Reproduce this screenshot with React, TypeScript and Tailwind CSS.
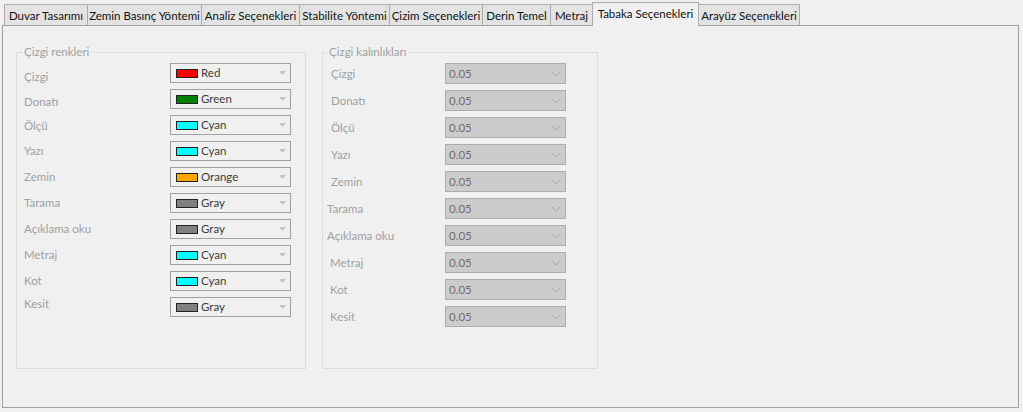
const tabs = [
  { label: "Duvar Tasarımı", cls: "w-[83px] border-l" },
  { label: "Zemin Basınç Yöntemi", cls: "w-[114px] border-l" },
  { label: "Analiz Seçenekleri", cls: "w-[98px] border-l" },
  { label: "Stabilite Yöntemi", cls: "w-[90px] border-l" },
  { label: "Çizim Seçenekleri", cls: "w-[93px] border-l" },
  { label: "Derin Temel", cls: "w-[68px] border-l" },
  { label: "Metraj", cls: "w-[42px] border-l" },
  { label: "Tabaka Seçenekleri", cls: "", active: true },
  { label: "Arayüz Seçenekleri", cls: "w-[101px] border-r" },
];

const colorRows = [
  { label: "Çizgi", color: "Red", swatch: "bg-[#ff0000]", lbl: "pt-[4px]" },
  { label: "Donatı", color: "Green", swatch: "bg-[#008000]", lbl: "pt-[3px]" },
  { label: "Ölçü", color: "Cyan", swatch: "bg-[#00ffff]", lbl: "pt-[1px]" },
  { label: "Yazı", color: "Cyan", swatch: "bg-[#00ffff]", lbl: "pt-0" },
  { label: "Zemin", color: "Orange", swatch: "bg-[#ffa500]", lbl: "pt-0" },
  { label: "Tarama", color: "Gray", swatch: "bg-[#808080]", lbl: "pt-0" },
  { label: "Açıklama oku", color: "Gray", swatch: "bg-[#808080]", lbl: "pt-0" },
  { label: "Metraj", color: "Cyan", swatch: "bg-[#00ffff]", lbl: "pt-0" },
  { label: "Kot", color: "Cyan", swatch: "bg-[#00ffff]", lbl: "pt-0" },
  { label: "Kesit", color: "Gray", swatch: "bg-[#808080]", lbl: "-mt-[3px]" },
];

const widthRows = [
  { label: "Çizgi", pl: "pl-[8px]" },
  { label: "Donatı", pl: "pl-[8px]" },
  { label: "Ölçü", pl: "pl-[8px]" },
  { label: "Yazı", pl: "pl-[8px]" },
  { label: "Zemin", pl: "pl-[8px]" },
  { label: "Tarama", pl: "pl-[4px]" },
  { label: "Açıklama oku", pl: "pl-[4px]" },
  { label: "Metraj", pl: "pl-[7px]" },
  { label: "Kot", pl: "pl-[7px]" },
  { label: "Kesit", pl: "pl-[7px]" },
];

const GroupBox = ({
  title,
  titleCls,
  cls,
  children,
}: {
  title: string;
  titleCls: string;
  cls: string;
  children: React.ReactNode;
}) => (
  <div className={`relative h-[317px] border border-[#dcdcdc] ${cls}`}>
    <span
      className={`absolute -top-[10px] px-[2px] bg-[#f0f0f0] text-[#a0a0a0] leading-[18px] ${titleCls}`}
    >
      {title}
    </span>
    {children}
  </div>
);

export default function App() {
  return (
    <div className="w-[1023px] h-[412px] bg-[#f0f0f0] font-['Lato',sans-serif] text-[11.5px] overflow-hidden">
      <div className="flex items-end pl-[4px] pt-[2px] text-[11.5px]">
        {tabs.map((t) =>
          t.active ? (
            <div
              key={t.label}
              className="relative z-10 -mb-px flex h-[24px] w-[107px] items-center justify-center border-x border-t border-[#adadad] bg-[#f0f0f0] pb-[1px] whitespace-nowrap text-[#111]"
            >
              {t.label}
            </div>
          ) : (
            <div
              key={t.label}
              className={`flex h-[21px] items-center justify-center border-t border-[#adadad] bg-[#e3e3e3] pt-[1px] text-[#111] whitespace-nowrap ${t.cls}`}
            >
              {t.label}
            </div>
          )
        )}
      </div>

      <div className="ml-[2px] flex h-[383px] w-[1017px] border border-[#a0a0a0] pl-[13px] pt-[26px]">
        <GroupBox title="Çizgi renkleri" titleCls="left-[5px]" cls="w-[290px]">
          <div className="flex flex-col pt-[10px]">
            {colorRows.map((r) => (
              <div key={r.label} className="flex h-[26px] items-start">
                <div
                  className={`w-[153px] pl-[7px] leading-[20px] text-[#a0a0a0] ${r.lbl}`}
                >
                  {r.label}
                </div>
                <div className="flex h-[20px] w-[121px] items-center border border-[#a0a0a0] pl-[5px] pr-[3px]">
                  <span
                    className={`h-[9px] w-[22px] shrink-0 border border-[#222] ${r.swatch}`}
                  />
                  <span className="ml-[3px] flex-1 leading-[18px] text-[#3c3c3c]">
                    {r.color}
                  </span>
                  <svg width="7" height="4" viewBox="0 0 7 4" className="mr-[1px]">
                    <path d="M0 0h7L3.5 4z" fill="#c4c4c4" />
                  </svg>
                </div>
              </div>
            ))}
          </div>
        </GroupBox>

        <GroupBox
          title="Çizgi kalınlıkları"
          titleCls="left-[4px]"
          cls="ml-[16px] w-[276px]"
        >
          <div className="flex flex-col pt-[10px]">
            {widthRows.map((r) => (
              <div key={r.label} className="flex h-[27px] items-start">
                <div
                  className={`w-[122px] leading-[21px] text-[#a0a0a0] ${r.pl}`}
                >
                  {r.label}
                </div>
                <div className="flex h-[21px] w-[121px] items-center border border-[#adadad] bg-[#cccccc] pl-[3px] pr-[4px]">
                  <span className="flex-1 leading-[19px] text-[#6d6d6d]">0.05</span>
                  <svg width="10" height="6" viewBox="0 0 10 6">
                    <path d="M0.5 0.5L5 5L9.5 0.5" fill="none" stroke="#a8a8a8" strokeWidth="1" />
                  </svg>
                </div>
              </div>
            ))}
          </div>
        </GroupBox>
      </div>
    </div>
  );
}
